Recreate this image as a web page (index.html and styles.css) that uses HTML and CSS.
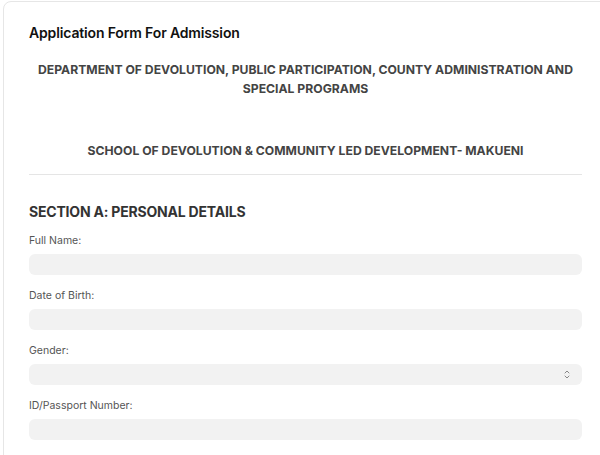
FILE: index.html
```html
<!DOCTYPE html>
<html lang="en">
<head>
<meta charset="utf-8">
<title>Application Form For Admission</title>
<link rel="stylesheet" href="styles.css">
</head>
<body>
<div class="card">
  <h1 class="title">Application Form For Admission</h1>
  <p class="dept">DEPARTMENT OF DEVOLUTION, PUBLIC PARTICIPATION, COUNTY ADMINISTRATION AND SPECIAL PROGRAMS</p>
  <p class="school">SCHOOL OF DEVOLUTION &amp; COMMUNITY LED DEVELOPMENT- MAKUENI</p>
  <hr class="divider">
  <h2 class="section">SECTION A: PERSONAL DETAILS</h2>
  <div class="field">
    <label class="label" for="name">Full Name:</label>
    <input class="input" id="name" type="text">
  </div>
  <div class="field">
    <label class="label" for="dob">Date of Birth:</label>
    <input class="input" id="dob" type="text">
  </div>
  <div class="field">
    <label class="label" for="gender">Gender:</label>
    <div class="select-wrap">
      <select class="input select" id="gender"><option></option></select>
      <svg class="chev" width="6" height="11" viewBox="0 0 6 11" aria-hidden="true">
        <path d="M1 4 L3 2 L5 4" fill="none" stroke="#888" stroke-width="1" stroke-linecap="round" stroke-linejoin="round"/>
        <path d="M1 7 L3 9 L5 7" fill="none" stroke="#888" stroke-width="1" stroke-linecap="round" stroke-linejoin="round"/>
      </svg>
    </div>
  </div>
  <div class="field">
    <label class="label" for="idno">ID/Passport Number:</label>
    <input class="input" id="idno" type="text">
  </div>
</div>
</body>
</html>
```
FILE: styles.css
```css
html, body {
  margin: 0;
  padding: 0;
  background: #fff;
  overflow: hidden;
}
body {
  font-family: Inter, "Noto Sans", sans-serif;
  width: 600px;
  height: 455px;
}
.card {
  margin: 1px 0 0 3px;
  width: 553px;
  padding: 21px 25px 30px 25px;
  border: 1px solid #e6e6e6;
  border-radius: 8px;
  background: #fff;
}
.title {
  margin: 0;
  font-size: 14px;
  line-height: 20px;
  font-weight: 600;
  color: #111;
  letter-spacing: -0.15px;
}
.dept {
  margin: 17px 0 0 0;
  text-align: center;
  font-size: 12.2px;
  line-height: 19px;
  font-weight: 700;
  color: #444;
}
.school {
  margin: 43px 0 0 0;
  text-align: center;
  font-size: 12.2px;
  line-height: 19px;
  font-weight: 700;
  color: #444;
}
.divider {
  margin: 14px 0 0 0;
  border: 0;
  border-top: 1px solid #e5e5e5;
  height: 0;
}
.section {
  margin: 27px 0 12px 0;
  font-size: 14px;
  line-height: 20px;
  font-weight: 700;
  color: #333;
  letter-spacing: -0.2px;
}
.field {
  display: flex;
  flex-direction: column;
  margin-bottom: 14px;
}
.label {
  font-size: 10.5px;
  line-height: 14px;
  color: #555;
  margin-bottom: 6px;
}
.input {
  box-sizing: border-box;
  width: 100%;
  height: 21px;
  border: 0;
  border-radius: 6px;
  background: #f2f2f2;
  padding: 0 8px;
  margin: 0;
  font: inherit;
  font-size: 10px;
  outline: none;
}
.select-wrap {
  position: relative;
}
.select {
  appearance: none;
  -webkit-appearance: none;
  display: block;
}
.chev {
  position: absolute;
  right: 12px;
  top: 5px;
  pointer-events: none;
}
```
